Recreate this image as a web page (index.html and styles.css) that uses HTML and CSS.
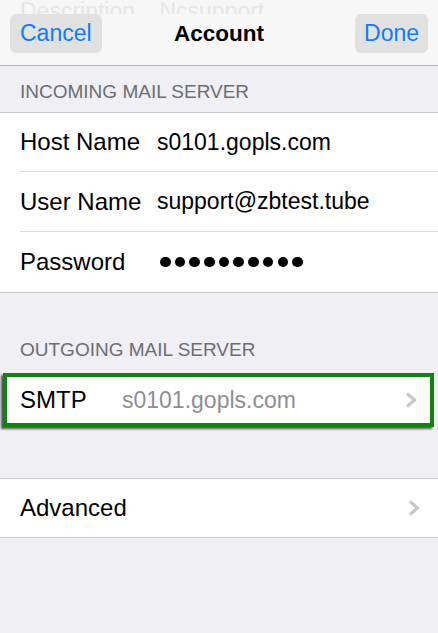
FILE: index.html
```html
<!DOCTYPE html>
<html lang="en">
<head>
  <meta charset="UTF-8" />
  <meta name="viewport" content="width=device-width, initial-scale=1.0"/>
  <title>Account</title>
  <link rel="stylesheet" href="styles.css">
</head>
<body>

  <header class="navbar">
    <div class="ghost">
      <span class="ghost-label">Description</span>
      <span>Ncsupport</span>
    </div>
    <div class="nav-row">
      <button class="nav-btn">Cancel</button>
      <div class="nav-title">Account</div>
      <button class="nav-btn done">Done</button>
    </div>
  </header>

  <div class="section-title">INCOMING MAIL SERVER</div>
  <div class="group">
    <div class="row">
      <span class="label">Host Name</span>
      <span class="value">s0101.gopls.com</span>
    </div>
    <div class="row">
      <span class="label">User Name</span>
      <span class="value">support@zbtest.tube</span>
    </div>
    <div class="row">
      <span class="label">Password</span>
      <span class="dots">
        <i></i><i></i><i></i><i></i><i></i><i></i><i></i><i></i><i></i><i></i>
      </span>
    </div>
  </div>

  <div class="section-title outgoing">OUTGOING MAIL SERVER</div>
  <div class="row smtp">
    <span class="label short">SMTP</span>
    <span class="value muted">s0101.gopls.com</span>
    <svg class="chevron" width="12" height="16" viewBox="0 0 12 16">
      <path d="M2 1.5 L9.5 8 L2 14.5" fill="none" stroke="#c7c7cc" stroke-width="3"/>
    </svg>
  </div>

  <div class="group single">
    <div class="row">
      <span class="label">Advanced</span>
      <svg class="chevron" width="12" height="16" viewBox="0 0 12 16">
        <path d="M2 1.5 L9.5 8 L2 14.5" fill="none" stroke="#c7c7cc" stroke-width="3"/>
      </svg>
    </div>
  </div>

</body>
</html>
```

FILE: styles.css
```css
* { box-sizing: border-box; }

body {
  margin: 0;
  font-family: 'Liberation Sans', Arial, sans-serif;
  background-color: #efeff4;
  color: #000;
}

/* Navigation bar */
.navbar {
  background: #f7f7f7;
  border-bottom: 1px solid #b4b4b4;
  height: 66px;
}

.ghost {
  height: 14px;
  overflow: hidden;
  padding-left: 20px;
  font-size: 23px;
  line-height: 23px;
  color: #e6e6e6;
  white-space: nowrap;
}

.ghost span {
  display: inline-block;
  margin-top: -8px;
}

.ghost-label {
  width: 133px;
}

.nav-row {
  display: grid;
  grid-template-columns: 1fr auto 1fr;
  align-items: center;
  padding: 0 10px;
  height: 39px;
}

.nav-btn {
  justify-self: start;
  height: 39px;
  padding: 0 10px;
  border: none;
  border-radius: 6px;
  background: #e1e1e1;
  color: #107cf6;
  font-family: inherit;
  font-size: 23px;
}

.nav-btn.done {
  justify-self: end;
  padding: 0 9px;
}

.nav-title {
  font-size: 22.5px;
  font-weight: bold;
}

/* Sections */
.section-title {
  padding: 15px 20px 9px;
  font-size: 19px;
  line-height: 22px;
  color: #6d6d72;
}

.section-title.outgoing {
  padding-top: 46px;
  padding-bottom: 10px;
}

.group {
  background: #fff;
  border-top: 1px solid #c8c7cc;
  border-bottom: 1px solid #c8c7cc;
  padding-left: 20px;
}

.row {
  display: flex;
  align-items: center;
  height: 60px;
  padding-right: 20px;
  font-size: 23px;
  border-bottom: 1px solid #dadade;
}

.group .row:first-child { height: 59px; }
.group .row:last-child { border-bottom: none; }
.group.single .row { height: 58px; }

.label {
  width: 137px;
  font-size: 24px;
  flex-shrink: 0;
}

.label.short { width: 102px; }

.value { flex: 1; }
.value.muted { color: #8e8e93; }

.dots {
  display: flex;
  gap: 4.2px;
  padding-left: 3px;
}

.dots i {
  display: block;
  width: 10.5px;
  height: 10.5px;
  border-radius: 50%;
  background: #000;
}

.chevron {
  margin-left: auto;
  margin-right: -2px;
  flex-shrink: 0;
}

/* Highlighted SMTP row */
.row.smtp {
  height: 54px;
  margin: 2px 4px 51px 3px;
  padding-left: 13px;
  padding-right: 15px;
  background: #fff;
  border: 4px solid #0f850f;
  box-shadow: -2px 2px 2px rgba(0, 0, 0, 0.65);
}
```
